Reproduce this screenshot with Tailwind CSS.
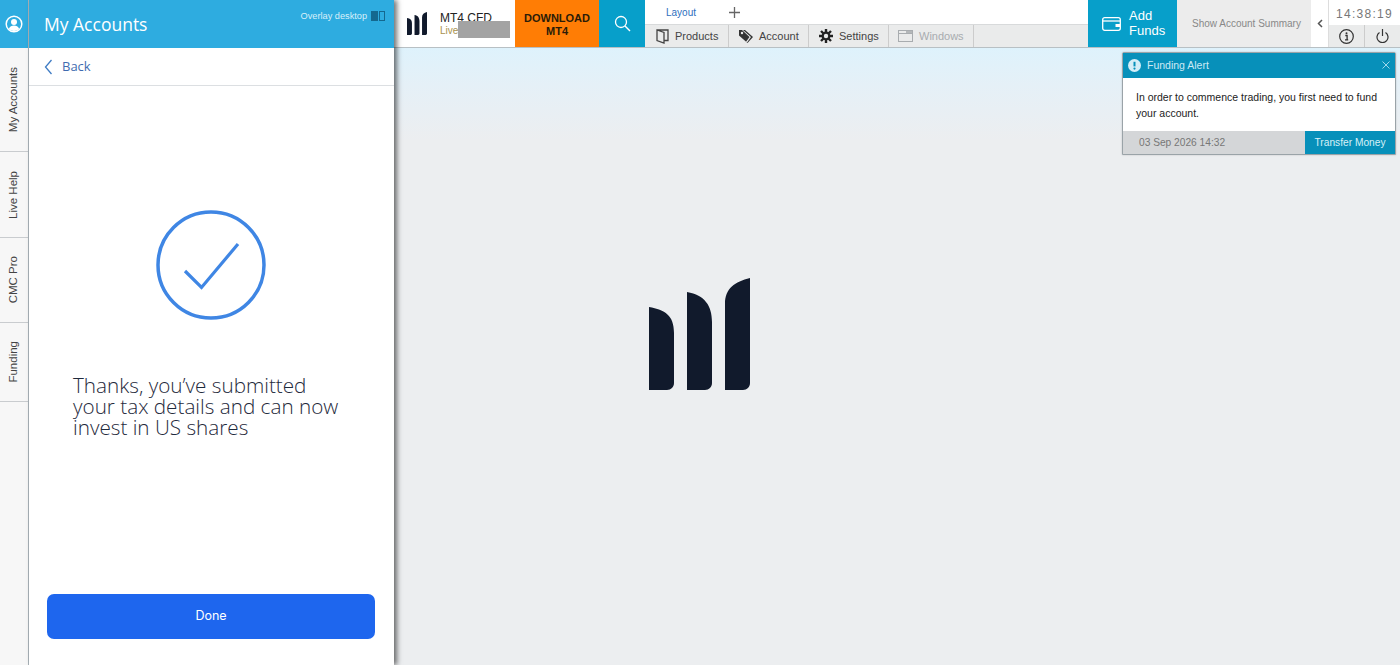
<!DOCTYPE html>
<html><head><meta charset="utf-8"><script src="https://cdn.jsdelivr.net/npm/@tailwindcss/browser@4"></script></head>
<body class="m-0 overflow-hidden">
<div class="flex w-[1400px] h-[665px] overflow-hidden bg-[#eceef0] font-['Liberation_Sans',Arial,sans-serif]">
  <!-- left rail -->
  <div class="w-[29px] shrink-0 flex flex-col bg-[#f7f7f7] border-r border-[#a9b3b9]">
    <div class="h-[48px] bg-[#2eace0] flex items-center justify-center">
      <svg width="18" height="18" viewBox="0 0 18 18"><circle cx="9" cy="9" r="7.8" fill="none" stroke="#fff" stroke-width="1.5"/><circle cx="9" cy="7" r="3" fill="#fff"/><path d="M3.8 14c1-2.6 3-3.4 5.2-3.4s4.200.8 5.200 3.4a7.500 7.500 0 0 1-10.400 0z" fill="#fff"/></svg>
    </div>
    <div class="h-[104px] flex items-center justify-center border-b border-[#c9cccf]"><span class="[writing-mode:vertical-rl] rotate-180 text-[11.500px] text-[#444]">My Accounts</span></div>
    <div class="h-[86px] flex items-center justify-center border-b border-[#c9cccf]"><span class="[writing-mode:vertical-rl] rotate-180 text-[11.500px] text-[#444]">Live Help</span></div>
    <div class="h-[85px] flex items-center justify-center border-b border-[#c9cccf]"><span class="[writing-mode:vertical-rl] rotate-180 text-[11.500px] text-[#444]">CMC Pro</span></div>
    <div class="h-[79px] flex items-center justify-center border-b border-[#c9cccf]"><span class="[writing-mode:vertical-rl] rotate-180 text-[11.500px] text-[#444]">Funding</span></div>
  </div>
  <!-- panel -->
  <div class="w-[365px] shrink-0 flex flex-col bg-white relative z-10 shadow-[3px_0_5px_rgba(0,0,0,0.55)]">
    <div class="h-[48px] bg-[#2eace0] flex justify-between pl-[15px] pr-[9px] text-white">
      <span class="font-['Open_Sans',sans-serif] text-[17.500px] leading-[48px]">My Accounts</span>
      <div class="flex items-start gap-[4px] pt-[9px]">
        <span class="text-[9.200px] leading-[14px] text-[#d8f0fa]">Overlay desktop</span>
        <div class="flex mt-[2px] gap-px"><div class="w-[7px] h-[10px] bg-[#14688f]"></div><div class="w-[6px] h-[10px] border border-[#14688f]"></div></div>
      </div>
    </div>
    <div class="h-[38px] flex items-center pl-[15px] gap-[9px] border-b border-[#dcdfe2] text-[#3f6cb0]">
      <svg width="9" height="16" viewBox="0 0 9 16"><path d="M7.500 1 1.500 8l6 7" fill="none" stroke="#3f7cc4" stroke-width="1.300"/></svg>
      <span class="font-['Open_Sans',sans-serif] text-[13px]">Back</span>
    </div>
    <div class="flex-1 flex flex-col items-center pt-[124px]">
      <svg class="mr-[1px]" width="110" height="110" viewBox="0 0 110 110"><circle cx="55" cy="55" r="53" fill="none" stroke="#3f86e4" stroke-width="3.500"/><path d="M29 61 45.500 77.500 82 34" fill="none" stroke="#3f86e4" stroke-width="3.200"/></svg>
      <p class="self-start ml-[44px] mt-[55px] whitespace-nowrap font-['Open_Sans',sans-serif] font-light text-[20.700px] leading-[21px] text-[#1f2a3c]">Thanks, you’ve submitted<br>your tax details and can now<br>invest in US shares</p>
    </div>
    <div class="pl-[18px] pr-[19px] pb-[26px]">
      <div class="h-[45px] rounded-[7px] bg-[#1e66ee] flex items-center justify-center text-white text-[12.500px] font-['Inter',sans-serif]">Done</div>
    </div>
  </div>
  <!-- main -->
  <div class="flex-1 flex flex-col relative min-w-0 bg-[linear-gradient(#def2fc_48px,#e5f0f7_85px,#eceef0_140px)]">
    <div class="h-[48px] flex shrink-0 bg-white border-b border-[#b8c0c4]">
      <div class="w-[121px] flex items-center pl-[13px] gap-[13px] relative">
        <svg width="20" height="23" viewBox="0 0 101 112" preserveAspectRatio="none"><path d="M0 29c16 3 25 8 25 26v50c0 4-3 7-7 7H0z M38 14c18 3 25 14 25 30v61c0 4-3 7-7 7H38z M76 26C76 10 86 4 101 0v105c0 4-3 7-7 7H76z" fill="#111a2c"/></svg>
        <div class="flex flex-col leading-none">
          <span class="text-[12px] text-[#222] leading-[14px]">MT4 CFD</span>
          <span class="text-[10px] text-[#a8924e] leading-[12px]">Live</span>
        </div>
        <div class="absolute left-[64px] top-[21px] w-[52px] h-[17px] bg-[#a3a3a3]"></div>
      </div>
      <div class="w-[84px] bg-[#ff7d05] flex items-center justify-center text-center pt-[2px] text-[11px] leading-[13px] font-bold text-[#2b1c08]">DOWNLOAD<br>MT4</div>
      <div class="w-[46px] bg-[#079fca] flex items-center justify-center">
        <svg width="17" height="17" viewBox="0 0 17 17"><circle cx="7" cy="7" r="5.500" fill="none" stroke="#fff" stroke-width="1.300"/><path d="m11 11 5 5" stroke="#fff" stroke-width="1.400"/></svg>
      </div>
      <div class="flex-1 flex flex-col min-w-0">
        <div class="h-[25px] flex items-center pl-[21px] border-b border-[#d8dadb]">
          <span class="text-[10px] text-[#2d6fbe]">Layout</span>
          <svg class="ml-[33px]" width="11" height="11" viewBox="0 0 11 11"><path d="M5.500 0v11M0 5.500h11" stroke="#666" stroke-width="1.300"/></svg>
        </div>
        <div class="flex-1 flex bg-[#eaebeb] text-[11px] text-[#444]">
          <div class="w-[84px] flex items-center pl-[11px] gap-[6px] border-r border-[#ccc]">
            <svg width="13" height="15" viewBox="0 0 13 15"><path d="M1 1h11v10.500H8M1 1l7 2.500V14l-7-2.500z" fill="none" stroke="#444" stroke-width="1.300"/></svg>Products
          </div>
          <div class="w-[80px] flex items-center pl-[9px] gap-[5px] border-r border-[#ccc]">
            <svg width="16" height="15" viewBox="0 0 16 15"><path d="M1 1h6l8 7-5.500 6L1 6.500z" fill="#333"/><path d="M4 1h1l8 7-4 5.500-1-.7 3.500-4.800z" fill="#eaebeb"/><circle cx="4" cy="4" r="1.200" fill="#eaebeb"/></svg>Account
          </div>
          <div class="w-[80px] flex items-center pl-[10px] gap-[6px] border-r border-[#ccc]">
            <svg width="14" height="14" viewBox="0 0 14 14"><g stroke="#222" stroke-width="2.400"><path d="M7 0v14M0 7h14M2 2l10 10M12 2 2 12"/></g><circle cx="7" cy="7" r="4.400" fill="#222"/><circle cx="7" cy="7" r="2.200" fill="#eaebeb"/></svg>Settings
          </div>
          <div class="w-[85px] flex items-center pl-[9px] gap-[6px] border-r border-[#ccc] text-[#a8acaf]">
            <svg width="15" height="12" viewBox="0 0 15 12"><rect x=".5" y=".5" width="14" height="11" fill="none" stroke="#a8acaf"/><path d="M8 1h6v2.500H8z" fill="#b4b7b9"/><path d="M1 3.500h13" stroke="#a8acaf"/></svg>Windows
          </div>
          <div class="flex-1"></div>
        </div>
      </div>
      <div class="w-[89px] bg-[#079fca] flex items-center pl-[14px] pb-[2px] gap-[8px] text-white text-[13px] leading-[15px]">
        <svg class="mt-[2px]" width="19" height="14" viewBox="0 0 19 14"><rect x=".7" y=".7" width="17.600" height="12.600" rx="2" fill="none" stroke="#fff" stroke-width="1.300"/><path d="M1 4h17" stroke="#fff" stroke-width="1.300"/><path d="M13.500 7h4.500v3h-4.500z" fill="#fff"/></svg>
        <span>Add<br>Funds</span>
      </div>
      <div class="w-[134px] bg-[#ececec] flex items-center pl-[15px] text-[10px] text-[#888]">Show Account Summary</div>
      <div class="w-[17px] flex items-center justify-center">
        <svg width="6" height="9" viewBox="0 0 6 9"><path d="M5 1 1.500 4.500 5 8" fill="none" stroke="#555" stroke-width="1.500"/></svg>
      </div>
      <div class="w-[72px] flex flex-col border-l border-[#ddd]">
        <div class="h-[25px] flex items-center justify-center pt-[2px] text-[12px] tracking-[1.300px] text-[#777]">14:38:19</div>
        <div class="flex-1 flex bg-[#eaebeb]">
          <div class="flex-1 flex items-center justify-center border-r border-[#ccc]">
            <svg width="15" height="15" viewBox="0 0 15 15"><circle cx="7.500" cy="7.500" r="6.800" fill="none" stroke="#333" stroke-width="1.200"/><path d="M6.300 6.500h1.800v4M6 10.800h3.200" fill="none" stroke="#333" stroke-width="1.300"/><circle cx="7.500" cy="4.200" r="1" fill="#333"/></svg>
          </div>
          <div class="flex-1 flex items-center justify-center">
            <svg width="13" height="14" viewBox="0 0 13 14"><path d="M3.500 3.500a5.500 5.500 0 1 0 6 0" fill="none" stroke="#333" stroke-width="1.200"/><path d="M6.500 0v7" stroke="#333" stroke-width="1.200"/></svg>
          </div>
        </div>
      </div>
    </div>
    <!-- big logo -->
    <div class="flex-1 flex items-start pt-[230px] pl-[255px]">
      <svg width="101" height="112" viewBox="0 0 101 112"><path d="M0 29c16 3 25 8 25 26v50c0 4-3 7-7 7H0z M38 14c18 3 25 14 25 30v61c0 4-3 7-7 7H38z M76 26C76 10 86 4 101 0v105c0 4-3 7-7 7H76z" fill="#111a2c"/></svg>
    </div>
    <!-- alert -->
    <div class="absolute right-[4px] top-[52px] w-[274px] flex flex-col rounded-t-[2px] border border-[#9aa3a8] bg-white shadow-[0_0_2px_rgba(0,0,0,0.2)]">
      <div class="h-[25px] bg-[#0790ba] flex items-center pl-[5px] pr-[5px] text-[10.500px] text-[#cdeaf5]">
        <svg width="13" height="13" viewBox="0 0 13 13"><circle cx="6.500" cy="6.500" r="6.500" fill="#d5eef8"/><path d="M6.500 2.800v4.600" stroke="#0790ba" stroke-width="2"/><circle cx="6.500" cy="9.600" r="1.100" fill="#0790ba"/></svg>
        <span class="ml-[6px]">Funding Alert</span>
        <svg class="ml-auto mb-[2px]" width="8" height="8" viewBox="0 0 8 8"><path d="m.5.500 7 7m0-7-7 7" stroke="#9fd8ec" stroke-width="1"/></svg>
      </div>
      <div class="h-[53px] pl-[13px] pr-[10px] pt-[11px] text-[10.500px] leading-[16px] text-[#222]">In order to commence trading, you first need to fund your account.</div>
      <div class="h-[23px] flex bg-[#d4d6d8] text-[10.200px]">
        <span class="flex-1 pl-[16px] leading-[23px] text-[#777]">03 Sep 2026 14:32</span>
        <span class="w-[90px] bg-[#0790ba] text-[#d8f0f8] text-center leading-[23px]">Transfer Money</span>
      </div>
    </div>
  </div>
</div>
</body></html>
